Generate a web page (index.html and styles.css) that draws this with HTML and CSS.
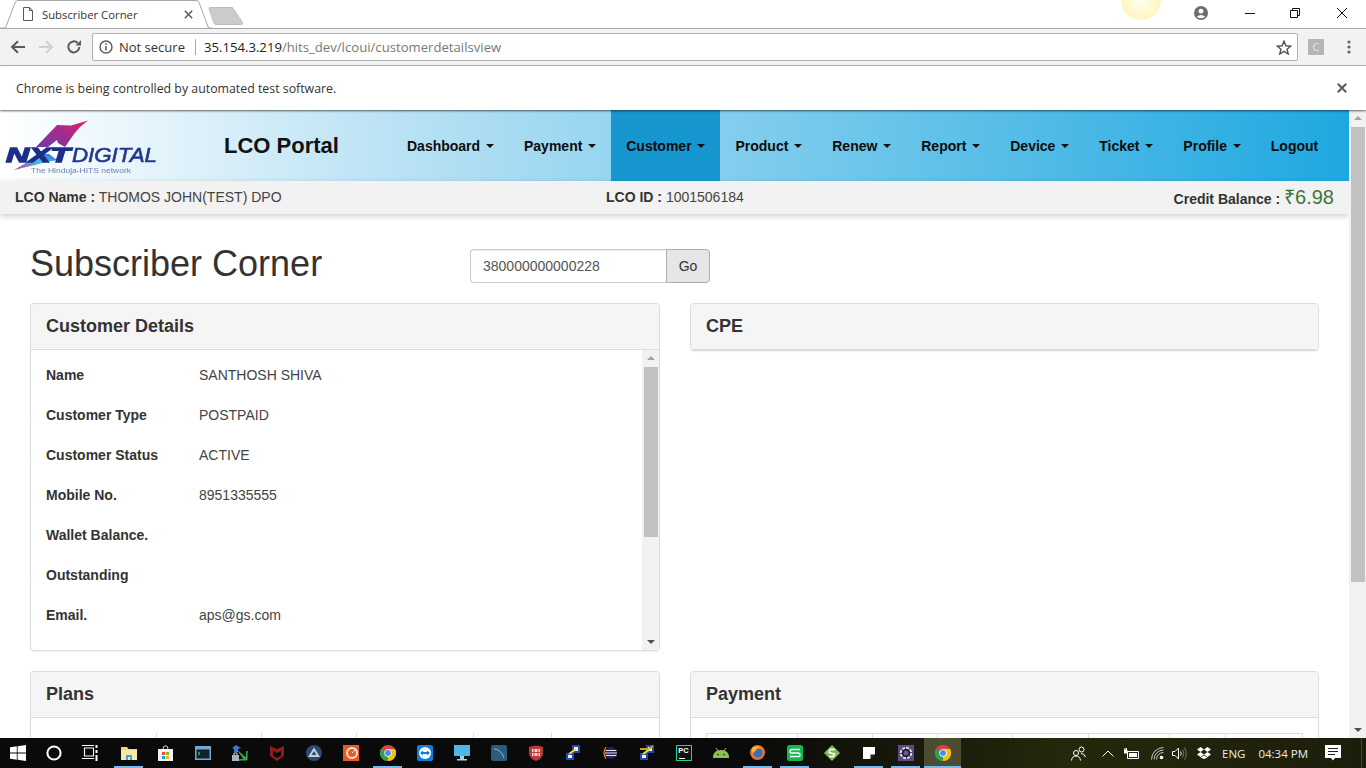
FILE: index.html
```html
<!DOCTYPE html>
<html lang="en">
<head>
<meta charset="utf-8">
<title>Subscriber Corner</title>
<link rel="stylesheet" href="styles.css">
</head>
<body>
<div class="window">
  <header class="tabstrip">
    <div class="tab">
      <svg class="tab-shape" width="212" height="29" viewBox="0 0 212 29"><path d="M0 28H5.500L15 3Q15.700 .5 18 .5H196Q198.500 .5 199.300 3L208.500 28H212" fill="#fff" stroke="#a8a8a8"/></svg>
      <svg class="tab-doc" width="12" height="14" viewBox="0 0 12 14"><path d="M1.500 .5H7.500L10.500 3.500V13.500H1.500ZM7.500 .5V3.500H10.500" fill="none" stroke="#5a5a5a"/></svg>
      <span class="tab-title">Subscriber Corner</span>
      <svg class="tab-close" width="9" height="9" viewBox="0 0 9 9"><path d="M.8 .8L8.200 8.200M8.200 .8L.8 8.200" stroke="#5f5f5f" stroke-width="1.600"/></svg>
    </div>
    <svg class="newtab" width="36" height="19" viewBox="0 0 36 19"><path d="M1 1.500Q1 .5 2 .5H24.500L34.500 15.500Q35 17.500 33 17.500H8Q6.500 17.500 6 16Z" fill="#cbcbcb" stroke="#bdbdbd"/></svg>
    <div class="caption">
      <svg class="cap-user" width="14" height="14" viewBox="0 0 14 14"><circle cx="7" cy="7" r="7" fill="#6e6e6e"/><circle cx="7" cy="5.200" r="2.400" fill="#fff"/><path d="M2.800 10.800Q7 7.200 11.200 10.800Q7 13.800 2.800 10.800Z" fill="#fff"/></svg>
      <svg class="cap-btn cap-min" width="10" height="10" viewBox="0 0 10 10"><path d="M0 5.500H10" stroke="#111"/></svg>
      <svg class="cap-btn cap-max" width="10" height="10" viewBox="0 0 10 10"><path d="M.5 2.500H7.500V9.500H.5ZM2.500 2.500V.5H9.500V7.500H7.500" fill="none" stroke="#111"/></svg>
      <svg class="cap-btn" width="10" height="10" viewBox="0 0 10 10"><path d="M0 0L10 10M10 0L0 10" stroke="#111"/></svg>
    </div>
  </header>
  <div class="sun"></div>

  <div class="toolbar">
    <svg class="tool" width="16" height="14" viewBox="0 0 16 14"><path d="M15 7H2.500M8 1.200L2 7L8 12.800" fill="none" stroke="#5a5a5a" stroke-width="2"/></svg>
    <svg class="tool" width="16" height="14" viewBox="0 0 16 14"><path d="M1 7H13.500M8 1.200L14 7L8 12.800" fill="none" stroke="#cfcfcf" stroke-width="2"/></svg>
    <svg class="tool" width="16" height="16" viewBox="0 0 16 16"><path d="M13.300 8A5.500 5.500 0 1 1 11.700 4" fill="none" stroke="#5a5a5a" stroke-width="2"/><path d="M9.500 6.500H15V1Z" fill="#5a5a5a"/></svg>
    <div class="omnibox">
      <svg class="info" width="14" height="14" viewBox="0 0 14 14"><circle cx="7" cy="7" r="6" fill="none" stroke="#5a5a5a" stroke-width="1.400"/><path d="M7 6V10.500M7 3.300V5" stroke="#5a5a5a" stroke-width="1.500"/></svg>
      <span class="secure">Not secure</span>
      <span class="divider"></span>
      <span class="url">35.154.3.219<span class="url-path">/hits_dev/lcoui/customerdetailsview</span></span>
      <svg class="star" width="16" height="15" viewBox="0 0 16 15"><path d="M8 1.200L9.900 5.800L14.800 6.100L11 9.200L12.300 14L8 11.400L3.700 14L5 9.200L1.200 6.100L6.100 5.800Z" fill="none" stroke="#555" stroke-width="1.400"/></svg>
    </div>
    <span class="ext">C</span>
    <svg class="menu" width="4" height="14" viewBox="0 0 4 14"><circle cx="2" cy="2" r="1.600" fill="#666"/><circle cx="2" cy="7" r="1.600" fill="#666"/><circle cx="2" cy="12" r="1.600" fill="#666"/></svg>
  </div>

  <div class="infobar">
    <span>Chrome is being controlled by automated test software.</span>
    <svg width="10" height="10" viewBox="0 0 10 10"><path d="M.8 .8L9.200 9.200M9.200 .8L.8 9.200" stroke="#5a5a5a" stroke-width="2"/></svg>
  </div>

  <div class="viewport">
    <main class="page">
      <nav class="navbar">
        <div class="logo">
          <svg width="155" height="60" viewBox="0 0 155 60">
            <defs>
              <linearGradient id="wing" x1="0" y1="1" x2="1" y2="0"><stop offset="0" stop-color="#6e3aa6"/><stop offset=".55" stop-color="#a82a8c"/><stop offset="1" stop-color="#e0245e"/></linearGradient>
              <linearGradient id="tail" x1="0" y1="1" x2="1" y2="0"><stop offset="0" stop-color="#c43a90"/><stop offset=".6" stop-color="#3fc4ee"/><stop offset="1" stop-color="#3a58c0"/></linearGradient>
            </defs>
            <path d="M31 31L52 9L66 9.500L83 4.500L75 11L69 18L60 31L53 27L52 24L43 31Z" fill="url(#wing)"/>
            <path d="M52 44L42 46L9 54L26 44L34 38L44 38Z" fill="url(#tail)"/>
            <text class="logo-nxt" x="1" y="45.500" textLength="64" lengthAdjust="spacingAndGlyphs">NXT</text>
            <text class="logo-digital" x="67" y="45.500" textLength="85" lengthAdjust="spacingAndGlyphs">DIGITAL</text>
            <text class="logo-tag" x="26" y="56.500" textLength="100" lengthAdjust="spacingAndGlyphs">The Hinduja-HITS network</text>
          </svg>
        </div>
        <div class="brand">LCO Portal</div>
        <ul class="menu-list">
          <li class="menu-item">Dashboard<span class="caret"></span></li>
          <li class="menu-item">Payment<span class="caret"></span></li>
          <li class="menu-item active">Customer<span class="caret"></span></li>
          <li class="menu-item">Product<span class="caret"></span></li>
          <li class="menu-item">Renew<span class="caret"></span></li>
          <li class="menu-item">Report<span class="caret"></span></li>
          <li class="menu-item">Device<span class="caret"></span></li>
          <li class="menu-item">Ticket<span class="caret"></span></li>
          <li class="menu-item">Profile<span class="caret"></span></li>
          <li class="menu-item">Logout</li>
        </ul>
      </nav>
      <div class="subbar">
        <div><b>LCO Name :</b> THOMOS JOHN(TEST) DPO</div>
        <div><b>LCO ID :</b> 1001506184</div>
        <div class="credit"><b>Credit Balance :</b> <span class="amount">₹6.98</span></div>
      </div>

      <div class="content">
        <div class="title-row">
          <h1>Subscriber Corner</h1>
          <div class="search">
            <input class="search-input" type="text" value="380000000000228">
            <button class="search-go" type="button">Go</button>
          </div>
        </div>

        <div class="panels">
          <section class="panel">
            <h2 class="panel-head">Customer Details</h2>
            <div class="panel-scroll">
              <dl class="details">
                <dt>Name</dt><dd>SANTHOSH SHIVA</dd>
                <dt>Customer Type</dt><dd>POSTPAID</dd>
                <dt>Customer Status</dt><dd>ACTIVE</dd>
                <dt>Mobile No.</dt><dd>8951335555</dd>
                <dt>Wallet Balance.</dt><dd></dd>
                <dt>Outstanding</dt><dd></dd>
                <dt>Email.</dt><dd>aps@gs.com</dd>
              </dl>
              <div class="scrollbar inner">
                <span class="arrow up"></span>
                <span class="thumb"></span>
                <span class="arrow down"></span>
              </div>
            </div>
          </section>
          <section class="panel">
            <h2 class="panel-head">CPE</h2>
          </section>
          <section class="panel">
            <h2 class="panel-head">Plans</h2>
            <div class="table-wrap">
              <div class="plans-table"><span></span><span></span><span></span><span></span><span></span><span></span></div>
            </div>
          </section>
          <section class="panel">
            <h2 class="panel-head">Payment</h2>
            <div class="table-wrap">
              <div class="pay-table"><span></span><span></span><span></span><span></span><span></span><span></span><span></span><span></span></div>
            </div>
          </section>
        </div>
      </div>
    </main>
    <div class="scrollbar outer">
      <span class="arrow up"></span>
      <span class="thumb"></span>
      <span class="arrow down"></span>
    </div>
  </div>

  <footer class="taskbar">
    <div class="task sys"><svg width="16" height="16" viewBox="0 0 16 16"><path d="M0 2.300L6.800 1.300V7.600H0ZM7.600 1.200L16 0V7.600H7.600ZM0 8.400H6.800V14.700L0 13.700ZM7.600 8.400H16V16L7.600 14.800Z" fill="#fff"/></svg></div>
    <div class="task sys"><svg width="16" height="16" viewBox="0 0 16 16"><circle cx="8" cy="8" r="6.600" fill="none" stroke="#fff" stroke-width="2"/></svg></div>
    <div class="task sys"><svg width="16" height="16" viewBox="0 0 16 16"><path d="M2.500 3H11.500V11H2.500ZM0 .5H12M0 13.500H12" fill="none" stroke="#fff" stroke-width="1.100"/><path d="M14.500 0V3M14.500 5V8M14.500 10V16" stroke="#fff" stroke-width="2"/></svg></div>
    <div class="task apps-start on"><svg width="16" height="14" viewBox="0 0 16 14"><path d="M0 1H6L7.500 3H16V14H0Z" fill="#f4d67c"/><path d="M0 4H16V14H0Z" fill="#fbe7a4"/><path d="M5 14V9H11V14H9V11H7V14Z" fill="#3aa0e0"/></svg></div>
    <div class="task"><svg width="15" height="16" viewBox="0 0 15 16"><path d="M5 4Q5 .8 7.500 .8T10 4" fill="none" stroke="#ddd"/><path d="M0 4H15V16H0Z" fill="#f4f4f4"/><path d="M4 7H7V10H4Z" fill="#e8502a"/><path d="M8 7H11V10H8Z" fill="#7cb62c"/><path d="M4 11H7V14H4Z" fill="#1f9fe6"/><path d="M8 11H11V14H8Z" fill="#f6b61a"/></svg></div>
    <div class="task"><svg width="16" height="14" viewBox="0 0 16 14"><path d="M0 0H16V14H0Z" fill="#6fa9d6"/><path d="M1.500 3.500H14.500V12.500H1.500Z" fill="#10222f"/><path d="M3 6L5 7.500L3 9" fill="none" stroke="#7fc67f"/></svg></div>
    <div class="task"><svg width="16" height="16" viewBox="0 0 16 16"><path d="M4 0L9 3L6 4V7H2V4L0 3Z" fill="#3a78d8"/><path d="M6 6L14 13L15 6V15H7L12 14Z" fill="#37a949" stroke="#37a949"/><path d="M0 10H7V16H0Z" fill="#a8b4c4"/><path d="M2 10V8H5V10" fill="none" stroke="#c9d2de"/></svg></div>
    <div class="task"><svg width="14" height="16" viewBox="0 0 14 16"><path d="M0 1L7 4L14 1V11L7 16L0 11ZM3 6V10.500L7 13L11 10.500V6L7 8Z" fill="#8e1d1d"/></svg></div>
    <div class="task"><svg width="16" height="16" viewBox="0 0 16 16"><circle cx="8" cy="8" r="8" fill="#2c4a6e"/><path d="M8 2.500L14 12H2ZM8 6L5.500 10H10.500Z" fill="#c8d0d8"/></svg></div>
    <div class="task"><svg width="16" height="16" viewBox="0 0 16 16"><path d="M0 0H16V16H0Z" fill="#e85a20"/><circle cx="9" cy="8" r="5" fill="none" stroke="#f4e4dc" stroke-width="2"/><path d="M9 8L13 4" stroke="#fff"/></svg></div>
    <div class="task on"><svg class="chrome-icon" width="16" height="16" viewBox="0 0 16 16"><circle cx="8" cy="8" r="8" fill="#dc4438"/><path d="M8 8L1 4A8 8 0 0 0 8 16L12 9Z" fill="#2da14e"/><path d="M8 8L8 16A8 8 0 0 0 15 4H8Z" fill="#f4c20d"/><circle cx="8" cy="8" r="3.700" fill="#fff"/><circle cx="8" cy="8" r="2.900" fill="#4a8af4"/></svg></div>
    <div class="task"><svg width="16" height="16" viewBox="0 0 16 16"><rect width="16" height="16" rx="2" fill="#0e7fe0"/><circle cx="8" cy="8" r="6" fill="#fff"/><path d="M3 8L6 5.500V7H10V5.500L13 8L10 10.500V9H6V10.500Z" fill="#0e7fe0"/></svg></div>
    <div class="task"><svg width="16" height="16" viewBox="0 0 16 16"><path d="M0 0H16V11H0Z" fill="#4cb8e8"/><path d="M6 11H10V14H6ZM3 14H13V15.500H3Z" fill="#9dd4ef"/></svg></div>
    <div class="task"><svg width="16" height="16" viewBox="0 0 16 16"><rect width="16" height="16" rx="2" fill="#2a5d7c"/><path d="M3 4Q10 4 13 13" fill="none" stroke="#8fb8cc"/></svg></div>
    <div class="task"><svg width="14" height="16" viewBox="0 0 14 16"><path d="M0 2Q7 -1 14 2V9Q13 14 7 16Q1 14 0 9Z" fill="#b83a3a"/><path d="M3 4H11V11H3Z" fill="#f0d8d8"/><path d="M5 4V11M9 4V11M3 7.500H11" stroke="#b83a3a"/></svg></div>
    <div class="task"><svg width="14" height="16" viewBox="0 0 14 16"><path d="M6 0H14V8H6Z" fill="#2747b8"/><path d="M0 8H8V15H0Z" fill="#2747b8"/><path d="M8 2H12V6H8ZM2 10H6V13H2Z" fill="#f4f4f4"/><path d="M3 9L10 4" stroke="#f6e11a" stroke-width="2"/></svg></div>
    <div class="task"><svg width="14" height="14" viewBox="0 0 14 14"><circle cx="8" cy="7" r="6" fill="#2c2255"/><path d="M2.500 4.500H13.500M2 7H14M2.500 9.500H13.500" stroke="#e4e2f0"/><path d="M3 1Q-1 7 3 13" fill="none" stroke="#e8862a" stroke-width="1.200"/></svg></div>
    <div class="task"><svg width="14" height="16" viewBox="0 0 14 16"><path d="M6 0H14V8H6Z" fill="#2747b8"/><path d="M0 8H8V15H0Z" fill="#2747b8"/><path d="M8 2H12V6H8ZM2 10H6V13H2Z" fill="#f4f4f4"/><path d="M0 4H9L13 1" fill="none" stroke="#b8a71a" stroke-width="2"/><path d="M3 9L10 4" stroke="#f6e11a" stroke-width="2"/></svg></div>
    <div class="task"><span class="pc-icon">PC<i></i></span></div>
    <div class="task"><svg width="16" height="10" viewBox="0 0 16 10"><path d="M0 10Q0 2 8 2T16 10Z" fill="#8cc152"/><path d="M3 0L5 3M13 0L11 3" stroke="#8cc152"/><circle cx="5" cy="6.500" r=".8" fill="#111"/><circle cx="11" cy="6.500" r=".8" fill="#111"/></svg></div>
    <div class="task on"><svg width="15" height="15" viewBox="0 0 15 15"><circle cx="7.500" cy="7.500" r="7.500" fill="#e8742a"/><circle cx="8" cy="8" r="4.500" fill="#3b6fb8"/><path d="M2 3Q7 -1 13 4Q9 2 7 4Q5 7 2 8Z" fill="#f6b42e"/></svg></div>
    <div class="task on"><svg width="16" height="16" viewBox="0 0 16 16"><rect width="16" height="16" rx="2.500" fill="#11b84e"/><path d="M13 4.500H5Q3 4.500 3 6.500T5 8H11Q13 8 13 10T11 11.500H3" fill="none" stroke="#fff" stroke-width="1.300"/></svg></div>
    <div class="task"><svg width="16" height="16" viewBox="0 0 16 16"><path d="M8 0L16 8L8 16L0 8Z" fill="#7dbb5a"/><path d="M11 4.500H6L5 7.500L10.500 9L9.500 11.500H5" fill="none" stroke="#fff" stroke-width="1.600"/></svg></div>
    <div class="task on"><svg width="12" height="12" viewBox="0 0 12 12"><path d="M0 0H12V7L7 12H0Z" fill="#fff"/><path d="M12 7.500L7.500 12V7.500Z" fill="#222"/></svg></div>
    <div class="task on"><svg width="16" height="16" viewBox="0 0 16 16"><path d="M0 0H16V16H0Z" fill="#5c4a80"/><circle cx="8" cy="8" r="5.200" fill="#1c1830" stroke="#ddd" stroke-width="2" stroke-dasharray="3 1"/><circle cx="8" cy="8" r="2.500" fill="#6a5a90"/></svg></div>
    <div class="task on current"><svg width="16" height="16" viewBox="0 0 16 16"><circle cx="8" cy="8" r="8" fill="#dc4438"/><path d="M8 8L1 4A8 8 0 0 0 8 16L12 9Z" fill="#2da14e"/><path d="M8 8L8 16A8 8 0 0 0 15 4H8Z" fill="#f4c20d"/><circle cx="8" cy="8" r="3.700" fill="#fff"/><circle cx="8" cy="8" r="2.900" fill="#4a8af4"/></svg></div>
    <div class="tray">
      <svg class="t-people" width="15" height="15" viewBox="0 0 15 15"><circle cx="10.500" cy="3.500" r="2.500" fill="none" stroke="#fff"/><circle cx="5" cy="7" r="2.500" fill="none" stroke="#fff"/><path d="M.5 14.500Q1 10 5 10T9.500 14.500M10 7.500Q13.500 7.500 14.500 11" fill="none" stroke="#fff"/></svg>
      <svg class="t-chev" width="12" height="7" viewBox="0 0 12 7"><path d="M.5 6.500L6 1L11.500 6.500" fill="none" stroke="#fff"/></svg>
      <svg class="t-batt" width="16" height="11" viewBox="0 0 16 11"><path d="M3.500 3.500H14.500V10.500H3.500Z" fill="none" stroke="#fff"/><path d="M5 5H13V9H5Z" fill="#fff"/><path d="M0 2H3V5H0ZM1 0V2M2.500 0V2" stroke="#fff" fill="#fff"/></svg>
      <svg class="t-wifi" width="13" height="13" viewBox="0 0 13 13"><path d="M.5 12.500A12 12 0 0 1 12.500 .5M3 12.500A9.500 9.500 0 0 1 12.500 3M5.500 12.500A7 7 0 0 1 12.500 5.500" fill="none" stroke="#d8d8d8" stroke-width=".9"/><circle cx="10.500" cy="10.500" r="1.800" fill="#fff"/></svg>
      <svg class="t-vol" width="16" height="13" viewBox="0 0 16 13"><path d="M.5 4.500H3L6.500 1V12L3 8.500H.5Z" fill="none" stroke="#fff"/><path d="M8.500 4.500Q10 6.500 8.500 8.500" fill="none" stroke="#fff"/><path d="M10.500 2.500Q13 6.500 10.500 10.500M12.500 .5Q16 6.500 12.500 12.500" fill="none" stroke="#777"/></svg>
      <svg class="t-drop" width="14" height="12" viewBox="0 0 14 12"><path d="M3.500 0L7 2.500L3.500 5L0 2.500ZM10.500 0L14 2.500L10.500 5L7 2.500ZM3.500 5L7 7.500L3.500 10L0 7.500ZM10.500 5L14 7.500L10.500 10L7 7.500ZM3.500 10.500L7 8.500L10.500 10.500L7 12Z" fill="#fff"/></svg>
      <span class="t-lang">ENG</span>
      <span class="t-time">04:34 PM</span>
      <svg class="t-note" width="16" height="16" viewBox="0 0 16 16"><path d="M0 0H16V13H10L8 15.500L6 13H0Z" fill="#fff"/><path d="M3 3.500H13M3 6.500H13M3 9.500H10" stroke="#222"/></svg>
      <span class="t-show"></span>
    </div>
  </footer>
</div>
</body>
</html>
```
FILE: styles.css
```css
* { box-sizing: border-box; }
html, body { margin: 0; height: 100%; overflow: hidden; }
body { font-family: "Liberation Sans", Arial, sans-serif; font-size: 14px; color: #333; background: #fff; }
.window { position: relative; width: 1366px; height: 768px; display: flex; flex-direction: column; overflow: hidden; }

/* Browser chrome */
.tabstrip { height: 28px; flex: none; display: flex; align-items: flex-start; background: #fff; position: relative; }
.tab { position: relative; width: 208px; height: 28px; display: flex; align-items: center; font: 12px "Open Sans", sans-serif; color: #333; flex: none; }
.tab-shape { position: absolute; left: 0; top: 0; z-index: 0; }
.tab-doc { position: relative; margin-left: 22px; }
.tab-title { position: relative; margin-left: 8px; width: 112px; font-size: 11.300px; white-space: nowrap; }
.tab-close { position: relative; margin-left: 30px; }
.newtab { margin-top: 7px; flex: none; }
.caption { margin-left: auto; display: flex; align-items: center; height: 28px; }
.cap-user { margin-right: 37px; position: relative; top: -1px; }
.cap-btn { margin-right: 36px; position: relative; top: -1px; }
.cap-min { margin-right: 35px; }
.cap-max { margin-right: 37px; }
.cap-btn:last-child { margin-right: 19px; }
.sun { position: absolute; left: 1121px; top: -20px; width: 40px; height: 40px; border-radius: 50%; background: radial-gradient(circle, #fffef4 0%, #fff6bf 70%, #f9e48a 100%); }

.toolbar { height: 38px; flex: none; display: flex; align-items: center; background: #f2f2f2; border-top: 1px solid #a8a8a8; border-bottom: 1px solid #b5b5b5; padding-left: 10px; position: relative; }
.tool { margin-right: 12px; flex: none; }
.toolbar .tool:nth-child(3) { margin-right: 10px; }
.omnibox { width: 1206px; height: 28px; flex: none; display: flex; align-items: center; background: #fff; border: 1px solid #b0b0b0; border-radius: 2px; padding-left: 6px; font: 13px "Open Sans", sans-serif; }
.secure { margin-left: 6px; color: #333; font-size: 13px; }
.divider { width: 1px; height: 16px; background: #aaa; margin: 0 8px 0 10px; }
.url { color: #222; font-size: 13.150px; }
.url-path { color: #777; }
.star { margin-left: auto; margin-right: 5px; }
.ext { width: 16px; height: 16px; margin-left: 10px; background: #b5b5b5; color: #e6e6e6; font: 11px/16px "Open Sans", sans-serif; text-align: center; border-radius: 1px; flex: none; }
.menu { margin-left: 23px; flex: none; }

.infobar { height: 44px; flex: none; display: flex; align-items: center; justify-content: space-between; padding: 0 19px 0 16px; background: #fff; font: 12.350px "Open Sans", sans-serif; color: #333; position: relative; z-index: 2; box-shadow: 0 1px 2px rgba(0, 0, 0, .6); }

/* Page */
.viewport { flex: 1; min-height: 0; display: flex; }
.page { width: 1349px; flex: none; overflow: hidden; }
.navbar { height: 71px; display: flex; align-items: center; background: linear-gradient(to right, #fff 0, #bde3f5 28%, #1ea8e0 100%); }
.logo { width: 224px; padding-left: 5px; flex: none; line-height: 0; align-self: flex-end; padding-bottom: 5px; }
.logo svg { filter: blur(.35px); }
.logo-nxt { font: italic 700 20px "Liberation Sans", sans-serif; fill: #1c2f8a; stroke: #1c2f8a; stroke-width: 1.300px; }
.logo-digital { font: italic 400 20px "Liberation Sans", sans-serif; fill: #22388f; stroke: #22388f; stroke-width: .6px; }
.logo-tag { font: 7.800px "Liberation Sans", sans-serif; fill: #6f80ad; }
.brand { width: 168px; flex: none; font-size: 22px; font-weight: 700; color: #111; }
.menu-list { list-style: none; margin: 0; padding: 0; display: flex; height: 100%; }
.menu-item { padding: 0 15px; display: flex; align-items: center; font-size: 14px; font-weight: 700; color: #0d0d0d; white-space: nowrap; }
.menu-item.active { background: #1797cf; }
.caret { width: 0; height: 0; margin-left: 5.880px; border-top: 4px solid #111; border-left: 4px solid transparent; border-right: 4px solid transparent; }

.subbar { height: 33px; display: grid; grid-template-columns: 591px 1fr auto; align-items: center; padding: 0 15px 2px; background: #f2f2f2; color: #444; box-shadow: 0 2px 6px rgba(0, 0, 0, .2); position: relative; }
.subbar b { color: #333; }
.amount { font-size: 20px; color: #3c763d; }

.content { padding: 0 30px; }
.title-row { height: 89px; display: flex; align-items: flex-start; }
h1 { width: 440px; margin: 29px 0 0; font-size: 36px; font-weight: 400; color: #333; flex: none; }
.search { display: flex; height: 34px; margin-top: 35px; }
.search-input { width: 196px; height: 34px; padding: 6px 12px; font: 14px "Liberation Sans", sans-serif; color: #555; border: 1px solid #ccc; border-right: 0; border-radius: 4px 0 0 4px; background: #fff; box-shadow: inset 0 1px 1px rgba(0, 0, 0, .075); }
.search-go { width: 44px; height: 34px; padding: 0; font: 14px "Liberation Sans", sans-serif; color: #333; background: #e6e6e6; border: 1px solid #adadad; border-radius: 0 4px 4px 0; }

.panels { display: grid; grid-template-columns: 630px 629px; column-gap: 30px; row-gap: 20px; align-items: start; }
.panel { border: 1px solid #ddd; border-radius: 4px; background: #fff; box-shadow: 0 1px 1px rgba(0, 0, 0, .05); overflow: hidden; }
.panel-head { margin: 0; height: 46px; padding: 0 15px; display: flex; align-items: center; background: #f5f5f5; border-bottom: 1px solid #ddd; font-size: 18px; font-weight: 700; color: #333; }
.panel-scroll { height: 300px; display: flex; justify-content: space-between; }
.details { margin: 0; padding: 5px 15px; display: grid; grid-template-columns: 153px 1fr; grid-auto-rows: 40px; align-items: center; flex: 1; }
.details dt { font-weight: 700; color: #333; }
.details dd { margin: 0; color: #444; }

.scrollbar { width: 17px; flex: none; display: flex; flex-direction: column; align-items: center; background: #f1f1f1; }
.scrollbar .arrow { width: 0; height: 0; flex: none; border-left: 4px solid transparent; border-right: 4px solid transparent; }
.arrow.up { border-bottom: 4px solid #a3a3a3; margin-top: 6px; }
.arrow.down { border-top: 4px solid #505050; margin-top: auto; margin-bottom: 6px; }
.thumb { width: 14px; background: #c1c1c1; flex: none; margin-top: 7px; }
.scrollbar.inner .thumb { height: 170px; }
.scrollbar.outer .thumb { height: 455px; }

.table-wrap { padding: 15px 15px 0; }
.plans-table { display: grid; grid-template-columns: 110px 105px 95px 117px 78px 1fr; height: 20px; }
.plans-table span { border-left: 1px solid #ddd; }
.plans-table span:first-child { border-left: 0; }
.pay-table { display: grid; grid-template-columns: 91px 75px 65px 75px 76px 81px 56px 1fr; height: 20px; border: 1px solid #ddd; border-left: 0; }
.pay-table span { border-left: 1px solid #ddd; }

/* Taskbar */
.taskbar { height: 30px; flex: none; display: flex; align-items: stretch; background: linear-gradient(to right, #0a0a0a 0, #0a0a0a 55%, #26280c 78%, #1c1e0c 100%); color: #fff; }
.task { width: 37px; flex: none; display: flex; align-items: center; justify-content: center; position: relative; padding-bottom: 1px; }
.task.sys { width: 36px; }
.apps-start { margin-left: 2px; }
.task.on::after { content: ""; position: absolute; left: 4px; right: 4px; bottom: 0; height: 2px; background: #76b9ed; }
.task.current { background: #4c4c33; }
.task.current::after { left: 0; right: 0; }
.pc-icon { width: 16px; height: 16px; background: #111; border: 1px solid #21d789; color: #fff; font: 700 7.500px/9px "Liberation Sans", sans-serif; text-align: center; display: block; position: relative; }
.pc-icon i { position: absolute; left: 2px; bottom: 1px; width: 6px; height: 1px; background: #fff; }
.tray { flex: 1; display: flex; align-items: center; position: relative; padding-left: 110px; }
.t-people { margin-right: 16px; }
.t-chev { margin-right: 10px; }
.t-batt { margin-right: 11px; }
.t-wifi { margin-right: 8px; }
.t-vol { margin-right: 9px; }
.t-drop { margin-right: 11px; }
.t-lang, .t-time { font: 11.500px "Open Sans", sans-serif; color: #eee; }
.t-lang { margin-right: 13px; }
.t-time { margin-right: 17px; }
.t-note { flex: none; }
.t-show { position: absolute; right: 4px; top: 0; bottom: 0; width: 1px; background: #444; }
```
